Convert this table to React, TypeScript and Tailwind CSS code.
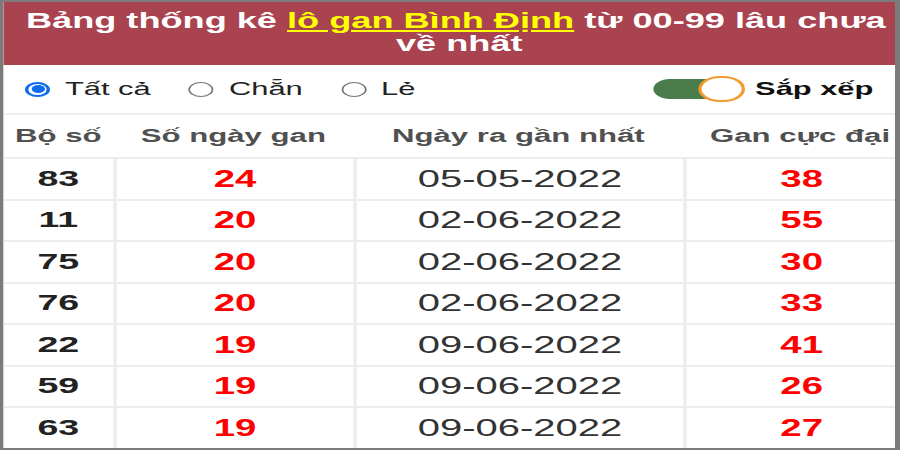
import React, { useState } from 'react';

type Filter = 'all' | 'even' | 'odd';

const rows = [
  { so: '83', gan: 24, ngay: '05-05-2022', max: 38 },
  { so: '11', gan: 20, ngay: '02-06-2022', max: 55 },
  { so: '75', gan: 20, ngay: '02-06-2022', max: 30 },
  { so: '76', gan: 20, ngay: '02-06-2022', max: 33 },
  { so: '22', gan: 19, ngay: '09-06-2022', max: 41 },
  { so: '59', gan: 19, ngay: '09-06-2022', max: 26 },
  { so: '63', gan: 19, ngay: '09-06-2022', max: 27 },
];

const filters: { id: Filter; label: string }[] = [
  { id: 'all', label: 'Tất cả' },
  { id: 'even', label: 'Chẵn' },
  { id: 'odd', label: 'Lẻ' },
];

const App: React.FC = () => {
  const [filter, setFilter] = useState<Filter>('all');
  const [sorted, setSorted] = useState(true);

  return (
    <div className="w-[900px] h-[450px] overflow-hidden bg-white">
      {/* the source image is a 540px wide widget stretched to 900 */}
      <div className="w-[540px] h-[450px] origin-top-left scale-x-[1.6667] flex flex-col overflow-hidden border-t-2 border-b-2 border-l-2 border-r-[3px] border-[#7b7b7b] bg-white font-['Liberation_Sans',Arial,sans-serif]">
        <div className="h-[63px] shrink-0 bg-[#a94350] pt-[7px] pl-2 text-center text-[21.7px] leading-[23px] font-bold text-white">
          <p>
            <span>Bảng thống kê </span>
            <span className="text-[#ffff00] underline underline-offset-2">lô gan Bình Định</span>
            <span> từ 00-99 lâu chưa</span>
          </p>
          <p className="pl-1">về nhất</p>
        </div>

        <div className="h-[48px] shrink-0 flex items-center justify-between pl-[13px] pr-[13px]">
          <div className="flex items-center gap-[23px]">
            {filters.map((f) => (
              <button key={f.id} onClick={() => setFilter(f.id)} className="flex items-center gap-[9px] text-[18.5px] text-[#222]">
                {filter === f.id ? (
                  <span className="w-[15px] h-[15px] rounded-full border-2 border-[#0b6cf0] flex items-center justify-center">
                    <span className="w-[8px] h-[8px] rounded-full bg-[#0b6cf0]"></span>
                  </span>
                ) : (
                  <span className="w-[15px] h-[15px] rounded-full border-[1.5px] border-[#767676]"></span>
                )}
                {f.label}
              </button>
            ))}
          </div>
          <button onClick={() => setSorted(!sorted)} className="flex items-center gap-[6px]">
            <span className="relative w-[55px] h-[26px] flex items-center">
              <span className={`w-[48px] h-[20px] rounded-full ${sorted ? 'bg-[#4b7c4c]' : 'bg-[#bbbbbb]'}`}></span>
              <span className={`absolute top-0 w-[28px] h-[26px] rounded-full bg-white border-2 border-[#f39a2e] ${sorted ? 'right-0' : 'left-0'}`}></span>
            </span>
            <span className="text-[18.5px] font-bold text-[#111]">Sắp xếp</span>
          </button>
        </div>

        <div className="h-[44px] shrink-0 grid grid-cols-[66px_144px_198px_140px] items-center border-t-2 border-[#eeeeee] text-[18.7px] font-bold text-[#505050] text-center">
          <span>Bộ số</span>
          <span>Số ngày gan</span>
          <span>Ngày ra gần nhất</span>
          <span>Gan cực đại</span>
        </div>

        {rows.map((r) => (
          <div key={r.so} className="h-[41.5px] shrink-0 grid grid-cols-[66px_144px_198px_140px] border-t-2 border-[#ececec] text-center">
            <span className="flex items-center justify-center text-[22.5px] font-bold text-[#222]">{r.so}</span>
            <span className="flex items-center justify-center border-l-2 border-[#ececec] text-[23px] font-bold text-[#ff0000]">{r.gan}</span>
            <span className="flex items-center justify-center border-l-2 border-[#ececec] text-[24px] text-[#333]">{r.ngay}</span>
            <span className="flex items-center justify-center border-l-2 border-[#ececec] text-[23px] font-bold text-[#ff0000]">{r.max}</span>
          </div>
        ))}
      </div>
    </div>
  );
};

export default App;
